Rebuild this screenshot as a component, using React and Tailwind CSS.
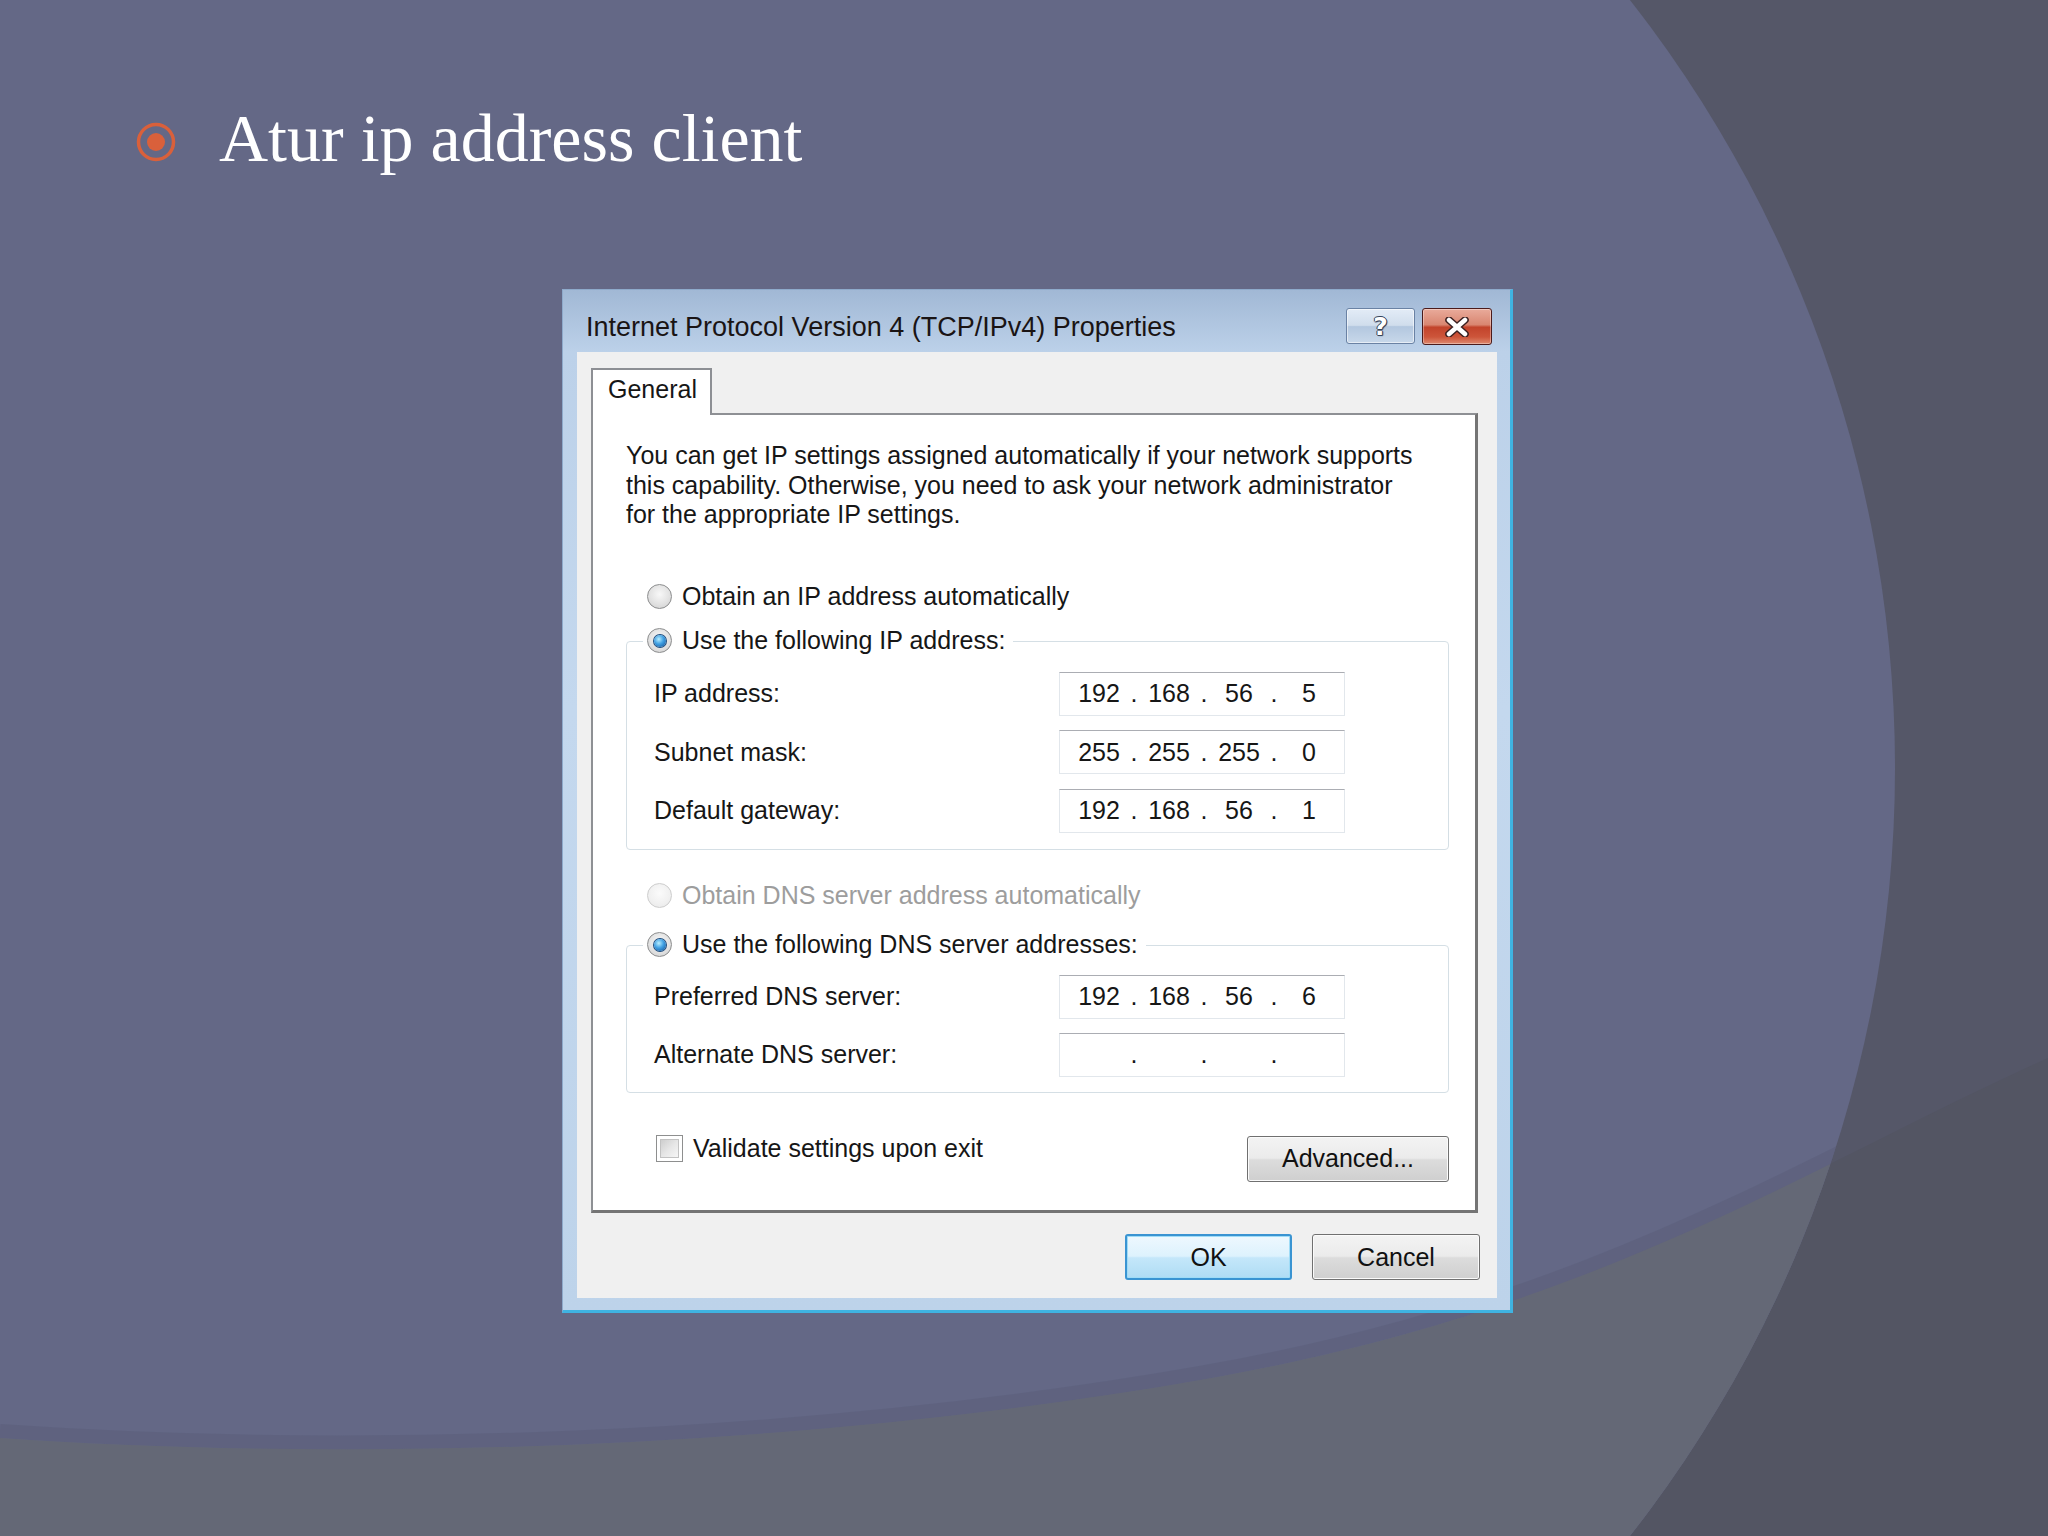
import React from "react";

const BAND = "M0 1438 C350 1462 800 1450 1200 1380 S1800 1170 2048 1058 L2048 1536 L0 1536 Z";
const EDGE = "M0 1438 C350 1462 800 1450 1200 1380 S1800 1170 2048 1058";

// slide backdrop: big soft arc on the right, grey floor band at the bottom
function Backdrop() {
  return (
    <svg className="absolute inset-0 h-full w-full" viewBox="0 0 2048 1536" preserveAspectRatio="none">
      <defs>
        <clipPath id="arc">
          <circle cx="650" cy="768" r="1245" />
        </clipPath>
      </defs>
      <rect width="2048" height="1536" fill="#555768" />
      <path d={BAND} fill="#535563" />
      <circle cx="650" cy="768" r="1245" fill="#646886" />
      <g clipPath="url(#arc)">
        <path d={EDGE} transform="translate(0,-7)" stroke="#5b5f7c" strokeWidth="14" fill="none" opacity="0.6" />
        <path d={BAND} fill="#646876" />
      </g>
    </svg>
  );
}

function Bullet() {
  return (
    <svg width="40" height="40" viewBox="0 0 40 40" className="mt-[18px] shrink-0">
      <circle cx="20" cy="20" r="17.5" fill="none" stroke="#d9603b" strokeWidth="3.5" />
      <circle cx="20" cy="20" r="9" fill="#d9603b" />
    </svg>
  );
}

function Radio({ checked, disabled }) {
  return (
    <span
      className={`flex h-[25px] w-[25px] shrink-0 items-center justify-center rounded-full border ${
        disabled
          ? "border-[#cdcdcd] bg-[radial-gradient(circle_at_50%_40%,#fbfbfb_0%,#f0f0f0_60%,#e6e6e6_100%)]"
          : "border-[#8c8d8e] bg-[radial-gradient(circle_at_50%_40%,#f8f8f8_0%,#e2e2e2_55%,#cdcdcd_100%)]"
      }`}
    >
      {checked && (
        <span className="h-[12px] w-[12px] rounded-full bg-[radial-gradient(circle_at_40%_35%,#b8eeff_0%,#3f9fe2_45%,#0f4e94_100%)] shadow-[0_0_0_1px_#1d4c7e]" />
      )}
    </span>
  );
}

function Checkbox() {
  return (
    <span className="flex h-[27px] w-[27px] shrink-0 border border-[#8e8f8f] bg-white p-[3px]">
      <span className="h-full w-full border border-[#c2c2c2] bg-[linear-gradient(135deg,#cdcdcd_0%,#e6e6e6_50%,#f6f6f6_100%)]" />
    </span>
  );
}

function IpField({ value }) {
  const parts = value ? value.split(".") : ["", "", "", ""];
  return (
    <div className="flex h-[44px] w-[286px] items-center border border-[#e2e7ec] border-t-[#abadb3] bg-white pl-[9px]">
      {parts.map((p, i) => (
        <div key={i} className="flex items-center">
          <span className="w-[60px] text-center">{p}</span>
          {i < 3 && <span className="w-[10px] text-center">.</span>}
        </div>
      ))}
    </div>
  );
}

function FieldRow({ label, value }) {
  return (
    <div className="flex items-center pl-[27px]">
      <span className="w-[405px]">{label}</span>
      <IpField value={value} />
    </div>
  );
}

function GroupBox({ legend, children, className }) {
  return (
    <div className={`rounded-[4px] border border-[#d5dfe5] ${className}`}>
      <div className="-mt-[16px] ml-[16px] flex h-[30px] w-fit items-center gap-[10px] bg-white pl-[4px] pr-[8px]">
        <Radio checked />
        <span>{legend}</span>
      </div>
      {children}
    </div>
  );
}

const greyBtn =
  "flex items-center justify-center rounded-[3px] border border-[#707070] bg-[linear-gradient(180deg,#f3f3f3_0%,#ebebeb_48%,#dcdcdc_52%,#cfcfcf_100%)] shadow-[inset_0_0_0_1px_#fbfbfb] text-[#111]";

function Dialog() {
  return (
    <div className="ml-[562px] mt-[117px] flex h-[1024px] w-[951px] flex-col border-b-[3px] border-l border-r-[3px] border-t border-b-[#3fb3e1] border-l-[#8eaacb] border-r-[#3fb3e1] border-t-[#8eaacb] bg-[linear-gradient(180deg,#a1b8d5_0px,#bcd1e9_62px,#c4d8ee_420px,#bdd3ea_100%)] font-['Liberation_Sans',Arial,sans-serif] text-[25px] leading-none text-[#161616]">
      {/* title bar */}
      <div className="flex h-[62px] shrink-0 items-start pl-[23px] pr-[18px]">
        <span className="mt-[24px] text-[27px] leading-[27px] text-[#1a1414]">
          Internet Protocol Version 4 (TCP/IPv4) Properties
        </span>
        <div className="ml-auto mt-[18px] flex gap-[7px]">
          <button className="flex h-[36px] w-[69px] items-center justify-center rounded-[3px] border border-[#6a82a4] bg-[linear-gradient(180deg,#e3ecf7_0%,#d0ddec_48%,#b3c7df_52%,#c8d8ea_100%)] shadow-[inset_0_0_0_1px_rgba(255,255,255,0.55)]">
            <span className="font-['DejaVu_Sans',sans-serif] text-[25px] font-bold leading-none text-white [text-shadow:1px_0_0_#34435c,-1px_0_0_#34435c,0_1px_0_#34435c,0_-1px_0_#34435c,1px_1px_1px_#34435c]">
              ?
            </span>
          </button>
          <button className="flex h-[37px] w-[70px] items-center justify-center rounded-[3px] border border-[#4b1b1b] bg-[linear-gradient(180deg,#e9ab9b_0%,#d98671_45%,#c2432b_52%,#cd553a_80%,#de8a6f_100%)] shadow-[inset_0_0_0_1px_rgba(255,255,255,0.35)]">
            <svg width="26" height="20" viewBox="0 0 26 20">
              <path d="M5 3 L21 17 M21 3 L5 17" stroke="#3b2020" strokeWidth="7.5" strokeLinecap="round" />
              <path d="M5 3 L21 17 M21 3 L5 17" stroke="#ffffff" strokeWidth="4.5" strokeLinecap="round" />
            </svg>
          </button>
        </div>
      </div>

      {/* client area */}
      <div className="ml-[14px] flex h-[946px] w-[920px] flex-col bg-[#f0f0f0] pl-[14px] pt-[16px]">
        <div className="relative z-10 -mb-[2px] flex h-[47px] w-[121px] items-start border-2 border-b-0 border-[#8d8f94] bg-white pl-[15px] pt-[7px]">
          <span className="leading-[25px]">General</span>
        </div>

        <div className="flex h-[800px] w-[887px] flex-col border-2 border-b-[3px] border-r-[3px] border-[#8e9094] border-b-[#747474] border-r-[#747474] bg-white pl-[33px] pr-[26px]">
          <p className="mt-[26px] leading-[29.5px]">
            You can get IP settings assigned automatically if your network supports
            <br />
            this capability. Otherwise, you need to ask your network administrator
            <br />
            for the appropriate IP settings.
          </p>

          <div className="mt-[52px] flex h-[30px] items-center gap-[10px] pl-[21px]">
            <Radio />
            <span>Obtain an IP address automatically</span>
          </div>

          <GroupBox legend="Use the following IP address:" className="mt-[29px] pb-[16px]">
            <div className="mt-[16px] flex flex-col gap-[14.5px]">
              <FieldRow label="IP address:" value="192.168.56.5" />
              <FieldRow label="Subnet mask:" value="255.255.255.0" />
              <FieldRow label="Default gateway:" value="192.168.56.1" />
            </div>
          </GroupBox>

          <div className="mt-[31px] flex h-[30px] items-center gap-[10px] pl-[21px] text-[#9d9d9d]">
            <Radio disabled />
            <span>Obtain DNS server address automatically</span>
          </div>

          <GroupBox legend="Use the following DNS server addresses:" className="mt-[34px] pb-[15px]">
            <div className="mt-[15px] flex flex-col gap-[14px]">
              <FieldRow label="Preferred DNS server:" value="192.168.56.6" />
              <FieldRow label="Alternate DNS server:" />
            </div>
          </GroupBox>

          <div className="mt-[42px] flex items-start">
            <div className="ml-[30px] flex h-[27px] items-center gap-[10px]">
              <Checkbox />
              <span>Validate settings upon exit</span>
            </div>
            <button className={`${greyBtn} ml-auto mt-[1px] h-[46px] w-[202px]`}>Advanced...</button>
          </div>
        </div>

        <div className="mt-[21px] flex justify-end gap-[20px] pr-[17px]">
          <button className="flex h-[46px] w-[167px] items-center justify-center rounded-[3px] border-2 border-[#3a94d2] bg-[linear-gradient(180deg,#eef8fe_0%,#ddf2fd_48%,#c4e7fa_52%,#afdcf4_100%)] shadow-[inset_0_0_0_1px_#9fdcf7] text-[#111]">
            OK
          </button>
          <button className={`${greyBtn} h-[46px] w-[168px]`}>Cancel</button>
        </div>
      </div>
    </div>
  );
}

export default function App() {
  return (
    <div className="relative h-[1536px] w-[2048px] overflow-hidden bg-[#646886]">
      <Backdrop />
      <div className="relative flex flex-col">
        <div className="flex items-start pl-[136px] pt-[104px]">
          <Bullet />
          <h1 className="ml-[43px] font-['Liberation_Serif','Times_New_Roman',serif] text-[68px] leading-[68px] text-white">
            Atur ip address client
          </h1>
        </div>
        <Dialog />
      </div>
    </div>
  );
}
